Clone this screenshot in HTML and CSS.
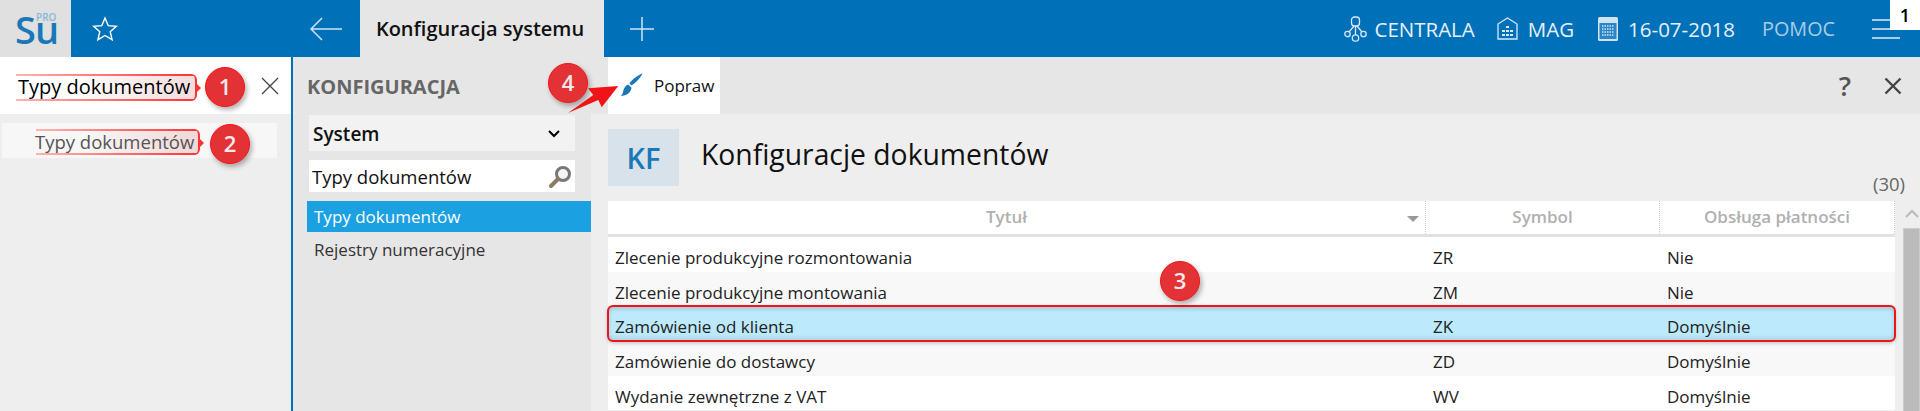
FILE: index.html
```html
<!DOCTYPE html>
<html lang="en">
<head>
<meta charset="UTF-8">
<meta name="viewport" content="width=device-width, initial-scale=1.0">
<title>Konfiguracja systemu</title>
<link rel="stylesheet" href="styles.css">
</head>
<body>

<header class="topbar">
  <div class="logo"><span class="logo-su">Su</span><span class="logo-pro">PRO</span></div>
  <div class="star">
    <svg width="26" height="26" viewBox="0 0 26 26"><path d="M13 2l3.200 7.600 8.200.7-6.200 5.400 1.900 8L13 19.500l-7.100 4.200 1.900-8L1.600 10.300l8.200-.7z" fill="none" stroke="#fff" stroke-width="1.400"/></svg>
  </div>
  <div class="back">
    <svg width="32" height="24" viewBox="0 0 32 24"><path d="M1 12h31M12 1L1 12l11 11" fill="none" stroke="#cfe3f2" stroke-width="1.500"/></svg>
  </div>
  <div class="tab">Konfiguracja systemu</div>
  <div class="plus">
    <svg width="24" height="24" viewBox="0 0 24 24"><path d="M12 0v24M0 12h24" stroke="#cfe3f2" stroke-width="1.500"/></svg>
  </div>
  <div class="top-right">
    <div class="top-item top-centrala">
      <svg width="23" height="26" viewBox="0 0 23 26" fill="none" stroke="#d8e8f4" stroke-width="1.300"><rect x="7.500" y="1" width="8" height="9" rx="3"/><circle cx="3.500" cy="18" r="2.700"/><circle cx="19.500" cy="18" r="2.700"/><circle cx="11.500" cy="22" r="3.200"/><path d="M10 10l-5 6M13 10l5 6M11.500 10v9"/></svg>
      <span>CENTRALA</span>
    </div>
    <div class="top-item top-mag">
      <svg width="21" height="23" viewBox="0 0 21 23" fill="none" stroke="#d8e8f4" stroke-width="1.300"><path d="M1 22V7l9.500-6L20 7v15z"/><path d="M9 10h3M5 14h3M9 14h3M13 14h3M5 18h3M9 18h3M13 18h3" stroke-width="2.200"/></svg>
      <span>MAG</span>
    </div>
    <div class="top-item top-date">
      <svg width="20" height="24" viewBox="0 0 20 24"><rect x="0" y="0" width="20" height="24" rx="1.500" fill="#cfe3f2"/><rect x="1.500" y="6" width="17" height="16" fill="#2a86c6"/><path d="M4 9h12M4 12h12M4 15h12M4 18h12" stroke="#cfe3f2" stroke-width="1.500" stroke-dasharray="1.500 1"/></svg>
      <span>16-07-2018</span>
    </div>
    <div class="top-item top-help">POMOC</div>
    <div class="menu"><i></i><i></i><i></i></div>
  </div>
  <div class="corner-num">1</div>
</header>

<main class="layout">

  <aside class="left">
    <div class="left-search">
      <span class="note-text">Typy dokumentów</span>
      <svg class="left-close" width="18" height="18" viewBox="0 0 18 18"><path d="M1 1l16 16M17 1L1 17" stroke="#444" stroke-width="1.300"/></svg>
    </div>
    <div class="left-result"><span class="note-text note-small">Typy dokumentów</span></div>
  </aside>

  <nav class="middle">
    <h2>KONFIGURACJA</h2>
    <div class="select">System
      <svg width="12" height="8" viewBox="0 0 12 8"><path d="M1 1l5 5 5-5" fill="none" stroke="#000" stroke-width="2"/></svg>
    </div>
    <div class="search">Typy dokumentów
      <svg width="24" height="24" viewBox="0 0 24 24"><circle cx="15" cy="9" r="6.500" fill="#f4f4f4" stroke="#777" stroke-width="3"/><path d="M10 14l-7 7" stroke="#8a7a66" stroke-width="4" stroke-linecap="round"/></svg>
    </div>
    <div class="menu-item active">Typy dokumentów</div>
    <div class="menu-item">Rejestry numeracyjne</div>
  </nav>

  <section class="content">
    <div class="toolbar">
      <div class="tool-btn">
        <svg width="24" height="24" viewBox="0 0 22 22"><path d="M21.500 0.500C20 4 15.500 9 11.500 11.500L9.500 9.500C12.500 5.500 18 1.500 21.500 0.500z" fill="#1a78b8"/><path d="M8.500 10.500l3 3c-.5 4-4 7.500-10 7.500 2.500-1.500 2-4 3-6.500 1-2 2.500-3.500 4-4z" fill="#1a78b8"/></svg>
        <span>Popraw</span>
      </div>
      <div class="tool-right">
        <span class="tool-help">?</span>
        <svg width="18" height="18" viewBox="0 0 18 18"><path d="M1.500 1.500l15 15M16.500 1.500l-15 15" stroke="#444" stroke-width="2.400"/></svg>
      </div>
    </div>

    <div class="head">
      <div class="kf">KF</div>
      <h1>Konfiguracje dokumentów</h1>
    </div>
    <div class="count">(30)</div>

    <div class="table-wrap">
      <div class="table">
        <div class="row thead">
          <div class="cell cell-title">Tytuł<b class="sort"></b></div>
          <div class="cell">Symbol</div>
          <div class="cell">Obsługa płatności</div>
        </div>
        <div class="row"><div class="cell">Zlecenie produkcyjne rozmontowania</div><div class="cell">ZR</div><div class="cell">Nie</div></div>
        <div class="row alt"><div class="cell">Zlecenie produkcyjne montowania</div><div class="cell">ZM</div><div class="cell">Nie</div></div>
        <div class="row selected"><div class="cell">Zamówienie od klienta</div><div class="cell">ZK</div><div class="cell">Domyślnie</div></div>
        <div class="row alt"><div class="cell">Zamówienie do dostawcy</div><div class="cell">ZD</div><div class="cell">Domyślnie</div></div>
        <div class="row"><div class="cell">Wydanie zewnętrzne z VAT</div><div class="cell">WV</div><div class="cell">Domyślnie</div></div>
      </div>
      <div class="scroll">
        <svg width="14" height="9" viewBox="0 0 14 9"><path d="M1 8l6-6 6 6" fill="none" stroke="#bbb" stroke-width="2"/></svg>
        <div class="thumb"></div>
      </div>
    </div>
  </section>
</main>

<!-- annotations on top of the screenshot -->
<div class="badge b1">1</div>
<div class="badge b2">2</div>
<div class="badge b3">3</div>
<div class="badge b4">4</div>
<svg class="arrow" width="56" height="30" viewBox="0 0 56 30"><path d="M0 29L25.300 11 20 4.300 50.300 2 33.700 23.300 30.300 16z" fill="#f01418"/></svg>

</body>
</html>
```
FILE: styles.css
```css
/* ---------- GLOBAL ---------- */
*{margin:0;padding:0;box-sizing:border-box;}
html,body{height:411px;overflow:hidden;}
body{font-family:"Open Sans","Noto Sans",sans-serif;background:#eee;color:#111;position:relative;}

/* ---------- TOPBAR ---------- */
.topbar{display:flex;align-items:center;height:57px;background:#0070b8;color:#e6f0f8;}
.logo{width:71px;height:57px;background:#e0e0e0;position:relative;}
.logo-su{position:absolute;left:15px;top:7px;font-size:38px;font-weight:600;color:#1a78b8;letter-spacing:-1px;line-height:44px;}
.logo-pro{position:absolute;left:36px;top:11px;font-size:10px;font-weight:600;color:#8db6d4;line-height:12px;}
.star{width:26px;margin-left:21px;height:26px;}
.back{margin-left:192px;height:24px;width:32px;}
.tab{width:244px;height:57px;margin-left:18px;padding-right:4px;background:#e6e6e6;color:#111;font-size:20px;font-weight:600;line-height:57px;text-align:center;}
.plus{margin-left:26px;height:24px;}
.top-right{display:flex;align-items:center;margin-left:auto;padding-right:20px;}
.top-item{display:flex;align-items:center;gap:7px;font-size:20.500px;}
.top-mag{margin-left:22px;gap:10px;}
.top-date{margin-left:24px;gap:10px;}
.top-help{margin-left:27px;color:#a9cde6;font-size:19.800px;}
.menu{width:28px;margin-left:37px;display:flex;flex-direction:column;gap:7px;}
.menu i{display:block;height:2px;background:#a9cde6;}
.corner-num{position:absolute;right:0;top:0;width:30px;height:30px;background:#fff;color:#000;font-size:18px;font-weight:600;text-align:center;line-height:30px;}

/* ---------- LAYOUT ---------- */
.layout{display:flex;height:354px;}

/* ---------- LEFT ---------- */
.left{width:293px;background:#eee;border-right:2px solid #0070b8;}
.left-search{height:57px;background:#fff;display:flex;align-items:center;padding-left:16px;}
.left-close{margin-left:64px;}
.left-result{margin:9px 14px 0 2px;height:35px;background:#f7f7f7;display:flex;align-items:center;padding-left:34px;}

/* callout drawn behind the found text: lines fade in from the left */
.note-text{position:relative;display:block;width:181px;height:27px;margin-top:3px;padding-left:2px;font-size:20px;line-height:25px;color:#000;white-space:nowrap;border-right:2px solid #f33;border-radius:0 6px 6px 0;background:linear-gradient(90deg,#ffb4b4,#f33) top/100% 2px no-repeat,linear-gradient(90deg,#ffb4b4,#f33) bottom/100% 2px no-repeat,linear-gradient(90deg,#fff 30%,#f3dcdc);}
.note-text::after{content:"";position:absolute;right:-6px;top:10px;border:4px solid transparent;border-left:4px solid #f33;border-right:0;}
.note-small{width:164px;height:26px;margin-top:3px;padding-left:0;font-size:18.500px;line-height:25px;color:#555;text-indent:-1px;background:linear-gradient(90deg,#ffb4b4,#f33) top/100% 2px no-repeat,linear-gradient(90deg,#ffb4b4,#f33) bottom/100% 2px no-repeat,linear-gradient(90deg,#f7f7f7 30%,#f0d8d8);}

/* ---------- MIDDLE ---------- */
.middle{width:298px;background:#e6e6e6;padding-left:14px;}
.middle h2{font-size:20px;font-weight:700;color:#666;line-height:24px;margin-top:18px;}
.select{width:266px;height:36px;margin:16px 0 0 2px;padding:2px 15px 0 4px;background:#f2f2f2;font-size:19px;font-weight:600;line-height:34px;display:flex;justify-content:space-between;align-items:center;}
.search{width:266px;height:32px;margin:9px 0 0 2px;padding:2px 3px 0;background:#fff;font-size:18.500px;line-height:30px;display:flex;justify-content:space-between;align-items:center;}
.menu-item{height:31px;padding-left:7px;font-size:17px;line-height:31px;color:#333;}
.menu-item.active{margin-top:9px;background:#1ba1e2;color:#fff;}
.menu-item:last-child{margin-top:2px;}

/* ---------- CONTENT ---------- */
.content{flex:1;min-width:0;}
.toolbar{height:57px;background:#e6e6e6;display:flex;justify-content:space-between;align-items:center;padding:0 18px 0 17px;}
.tool-btn{width:112px;height:57px;background:#fff;display:flex;align-items:center;gap:11px;padding-left:11px;font-size:17px;}
.tool-btn svg{margin-top:-2px;}
.tool-right{display:flex;align-items:center;gap:33px;}
.tool-help{font-size:27px;font-weight:600;color:#555;}
.head{display:flex;align-items:flex-start;gap:22px;margin:15px 0 0 17px;height:57px;}
.kf{width:71px;height:57px;background:#d8e2ea;color:#1a78b8;font-size:29px;font-weight:600;line-height:57px;text-align:center;}
.head h1{font-size:28.300px;font-weight:400;line-height:50px;}
.count{height:27px;margin-top:-12px;padding-right:15px;text-align:right;font-size:18.500px;line-height:20px;color:#666;}

/* ---------- TABLE ---------- */
.table-wrap{display:flex;margin-left:17px;height:180px;}
.table{width:1287px;flex:none;}
.row{display:grid;grid-template-columns:818px 234px 235px;height:34.700px;background:#fff;}
.row.alt{background:#f8f8f8;}
.cell{padding:8px 0 0 7px;font-size:17px;line-height:26px;white-space:nowrap;overflow:hidden;color:#222;}
.thead{height:36px;border-bottom:3px solid #e2e2e2;}
.thead .cell{padding:0;text-align:center;font-weight:600;line-height:32px;color:#b0b0b0;border-right:1px dotted #ccc;}
.thead .cell-title{position:relative;padding-right:20px;}
.sort{position:absolute;right:6px;top:15px;border:6px solid transparent;border-top:6px solid #999;border-bottom:0;}
.row.selected{background:#bce9fb;outline:2px solid #f01418;outline-offset:-1px;border-radius:5px;box-shadow:inset 0 3px 4px rgba(0,0,0,0.15),inset 0 -3px 4px rgba(0,0,0,0.1),0 2px 4px rgba(0,0,0,0.25);position:relative;}
.scroll{width:17px;margin-left:8px;padding-top:8px;text-align:center;}
.scroll svg{display:block;margin:0 auto 10px;}
.thumb{height:200px;background:#bbb;border:1px solid #ccc;}

/* ---------- ANNOTATIONS ---------- */
.badge{position:absolute;width:40px;height:40px;border-radius:50%;background:#e23236;border:1.500px solid #f11;color:#fbe9e9;font-size:22px;font-weight:600;line-height:37px;text-align:center;box-shadow:2px 3px 5px rgba(0,0,0,0.3);}
.b1{left:205px;top:67px;}
.b2{left:210px;top:124px;}
.b3{left:1160px;top:261px;}
.b4{left:548px;top:63px;}
.arrow{position:absolute;left:568px;top:84px;}
```
